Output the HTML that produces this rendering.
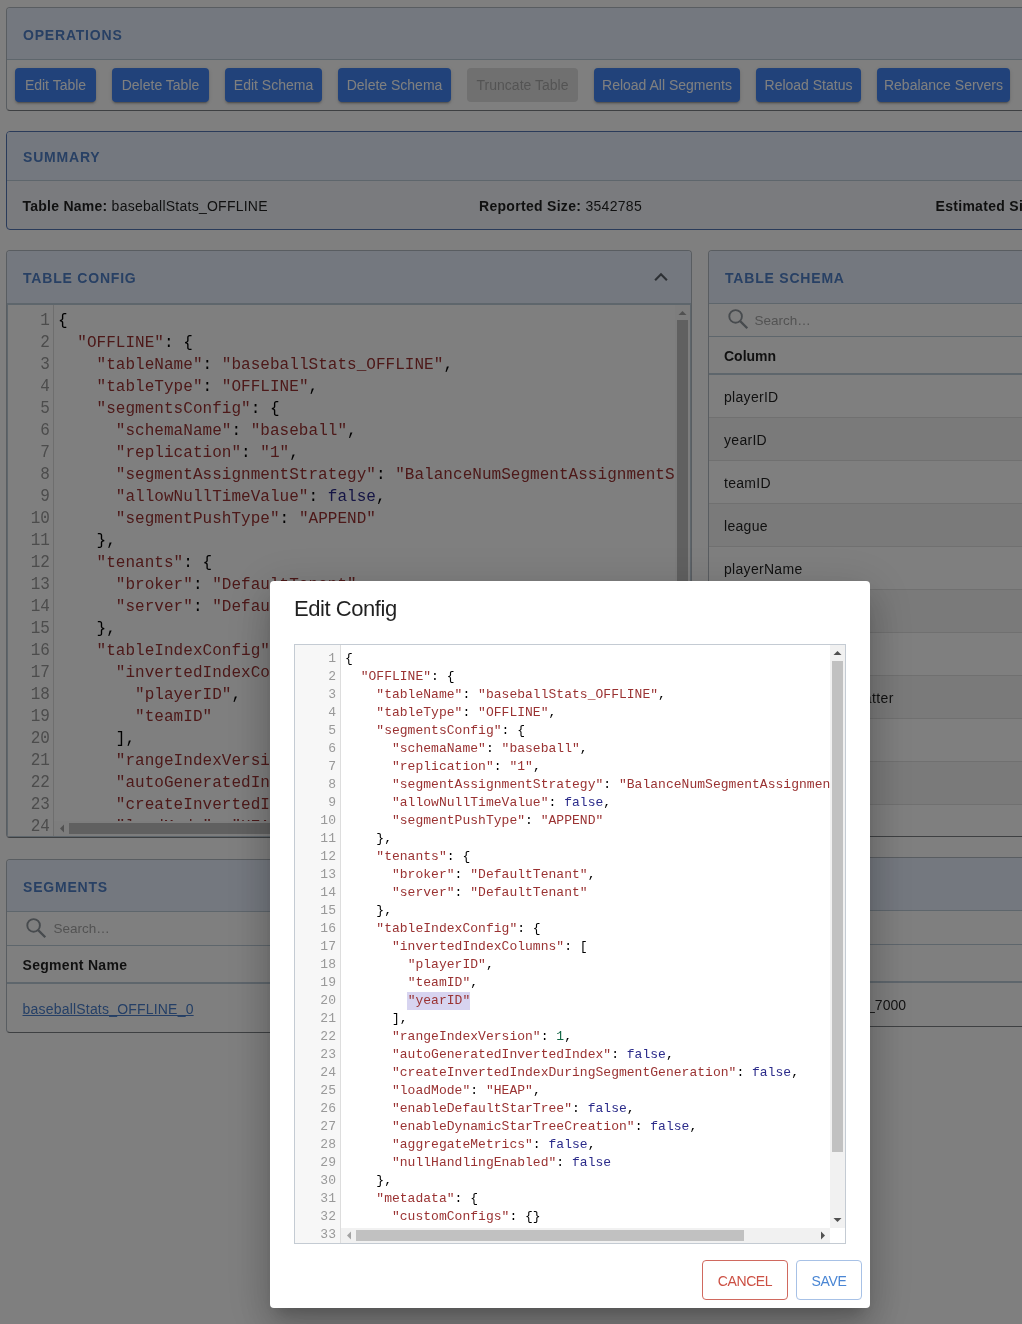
<!DOCTYPE html>
<html><head><meta charset="utf-8"><title>Edit Config</title>
<style>
html,body{margin:0;padding:0;}
body{width:1022px;height:1324px;overflow:hidden;position:relative;background:#ffffff;font-family:"Liberation Sans",sans-serif;color:rgba(0,0,0,0.87);}
.A{position:absolute;}
.t{position:absolute;white-space:pre;font-size:14px;line-height:16px;}
.card{position:absolute;box-sizing:border-box;background:#fff;border:1px solid #b3bac2;border-bottom-color:#7c8085;border-radius:4px;overflow:hidden;}
.hdr{position:absolute;left:0;right:0;top:0;background:#e9f1fe;border-bottom:1px solid #bdccd9;}
.ttl{font-weight:bold;letter-spacing:0.8px;color:#5080c8;}
.btn{position:absolute;top:68px;height:34px;box-sizing:border-box;background:#4285f4;color:#fff;border-radius:4px;font-size:14px;line-height:34px;text-align:center;white-space:pre;box-shadow:0 3px 1px -2px rgba(0,0,0,.2),0 2px 2px 0 rgba(0,0,0,.14),0 1px 5px 0 rgba(0,0,0,.12);}
.btn.dis{background:#e0e0e0;color:rgba(0,0,0,0.26);box-shadow:none;}
.b{position:absolute;white-space:pre;font-family:"Liberation Mono",monospace;font-size:16px;line-height:22px;letter-spacing:0.032px;color:#000;}
.m{position:absolute;white-space:pre;font-family:"Liberation Mono",monospace;font-size:13px;line-height:18px;letter-spacing:0.026px;color:#000;}
.ln{color:#999;text-align:right;}
.s{color:#9a3232;}
.a{color:#2b2b8a;}
.n{color:#164;}
.sb{position:absolute;background:#f1f1f1;}
.th{position:absolute;background:#c1c1c1;}
.row{position:absolute;left:0;right:0;border-bottom:1px solid rgba(224,224,224,1);}
.backdrop{position:absolute;left:0;top:0;width:1022px;height:1324px;background:rgba(0,0,0,0.5);}
.modal{position:absolute;left:270px;top:581px;width:600px;height:727px;background:#fff;border-radius:4px;box-shadow:0px 11px 15px -7px rgba(0,0,0,0.2),0px 24px 38px 3px rgba(0,0,0,0.14),0px 9px 46px 8px rgba(0,0,0,0.12);}

.b.ln{transform:scaleY(1.1);transform-origin:50% 68%;}

</style></head><body>
<div id="root" style="position:absolute;left:0;top:0;width:1022px;height:1324px;overflow:hidden;will-change:transform">
<div class="card" style="left:6px;top:7px;width:1100px;height:104px;">
<div class="hdr" style="height:51px;"></div>
<div class="t ttl" style="left:16.00px;top:19.15px;">OPERATIONS</div>

</div>
<div class="btn" style="left:15px;width:81px">Edit Table</div>
<div class="btn" style="left:112px;width:97px">Delete Table</div>
<div class="btn" style="left:225px;width:97px">Edit Schema</div>
<div class="btn" style="left:338px;width:113px">Delete Schema</div>
<div class="btn dis" style="left:467px;width:111px">Truncate Table</div>
<div class="btn" style="left:594px;width:146px">Reload All Segments</div>
<div class="btn" style="left:756px;width:105px">Reload Status</div>
<div class="btn" style="left:877px;width:133px">Rebalance Servers</div>
<div class="card" style="left:6px;top:131px;width:1100px;height:99px;background:#f4f7fc;border-color:#5476b4;">
<div class="hdr" style="height:48px;"></div>
<div class="t ttl" style="left:16.00px;top:17.15px;">SUMMARY</div>

</div>
<div class="t" style="left:22.50px;top:198.15px;letter-spacing:0.25px"><b>Table Name:</b> baseballStats_OFFLINE</div>
<div class="t" style="left:479.00px;top:198.15px;letter-spacing:0.3px"><b>Reported Size:</b> 3542785</div>
<div class="t" style="left:935.50px;top:198.15px;letter-spacing:0.3px"><b>Estimated Size:</b> 3542785</div>
<div class="card" style="left:6px;top:250px;width:686px;height:588px;">
<div class="hdr" style="height:52px;"></div>
<div class="t ttl" style="left:16.00px;top:19.15px;">TABLE CONFIG</div>
<div class="A" style="left:0;top:53px;width:684px;height:533px;box-sizing:border-box;border:1px solid #bdccd9;overflow:hidden">
<div class="A" style="left:0;top:0;width:45px;height:531px;border-right:1px solid #ddd;background:#fff"></div>
<div class="A" style="left:0;top:0;width:45px;height:531px;overflow:hidden">
<div class="b ln" style="top:5px;left:0;width:42px">1</div>
<div class="b ln" style="top:27px;left:0;width:42px">2</div>
<div class="b ln" style="top:49px;left:0;width:42px">3</div>
<div class="b ln" style="top:71px;left:0;width:42px">4</div>
<div class="b ln" style="top:93px;left:0;width:42px">5</div>
<div class="b ln" style="top:115px;left:0;width:42px">6</div>
<div class="b ln" style="top:137px;left:0;width:42px">7</div>
<div class="b ln" style="top:159px;left:0;width:42px">8</div>
<div class="b ln" style="top:181px;left:0;width:42px">9</div>
<div class="b ln" style="top:203px;left:0;width:42px">10</div>
<div class="b ln" style="top:225px;left:0;width:42px">11</div>
<div class="b ln" style="top:247px;left:0;width:42px">12</div>
<div class="b ln" style="top:269px;left:0;width:42px">13</div>
<div class="b ln" style="top:291px;left:0;width:42px">14</div>
<div class="b ln" style="top:313px;left:0;width:42px">15</div>
<div class="b ln" style="top:335px;left:0;width:42px">16</div>
<div class="b ln" style="top:357px;left:0;width:42px">17</div>
<div class="b ln" style="top:379px;left:0;width:42px">18</div>
<div class="b ln" style="top:401px;left:0;width:42px">19</div>
<div class="b ln" style="top:423px;left:0;width:42px">20</div>
<div class="b ln" style="top:445px;left:0;width:42px">21</div>
<div class="b ln" style="top:467px;left:0;width:42px">22</div>
<div class="b ln" style="top:489px;left:0;width:42px">23</div>
<div class="b ln" style="top:511px;left:0;width:42px">24</div>
</div>
<div class="A" style="left:46px;top:0;width:621px;height:516px;overflow:hidden">
<div class="b" style="top:5px;left:4px">{</div>
<div class="b" style="top:27px;left:4px">  <span class="s">&quot;OFFLINE&quot;</span>: {</div>
<div class="b" style="top:49px;left:4px">    <span class="s">&quot;tableName&quot;</span>: <span class="s">&quot;baseballStats_OFFLINE&quot;</span>,</div>
<div class="b" style="top:71px;left:4px">    <span class="s">&quot;tableType&quot;</span>: <span class="s">&quot;OFFLINE&quot;</span>,</div>
<div class="b" style="top:93px;left:4px">    <span class="s">&quot;segmentsConfig&quot;</span>: {</div>
<div class="b" style="top:115px;left:4px">      <span class="s">&quot;schemaName&quot;</span>: <span class="s">&quot;baseball&quot;</span>,</div>
<div class="b" style="top:137px;left:4px">      <span class="s">&quot;replication&quot;</span>: <span class="s">&quot;1&quot;</span>,</div>
<div class="b" style="top:159px;left:4px">      <span class="s">&quot;segmentAssignmentStrategy&quot;</span>: <span class="s">&quot;BalanceNumSegmentAssignmentStrategy&quot;</span>,</div>
<div class="b" style="top:181px;left:4px">      <span class="s">&quot;allowNullTimeValue&quot;</span>: <span class="a">false</span>,</div>
<div class="b" style="top:203px;left:4px">      <span class="s">&quot;segmentPushType&quot;</span>: <span class="s">&quot;APPEND&quot;</span></div>
<div class="b" style="top:225px;left:4px">    },</div>
<div class="b" style="top:247px;left:4px">    <span class="s">&quot;tenants&quot;</span>: {</div>
<div class="b" style="top:269px;left:4px">      <span class="s">&quot;broker&quot;</span>: <span class="s">&quot;DefaultTenant&quot;</span>,</div>
<div class="b" style="top:291px;left:4px">      <span class="s">&quot;server&quot;</span>: <span class="s">&quot;DefaultTenant&quot;</span></div>
<div class="b" style="top:313px;left:4px">    },</div>
<div class="b" style="top:335px;left:4px">    <span class="s">&quot;tableIndexConfig&quot;</span>: {</div>
<div class="b" style="top:357px;left:4px">      <span class="s">&quot;invertedIndexColumns&quot;</span>: [</div>
<div class="b" style="top:379px;left:4px">        <span class="s">&quot;playerID&quot;</span>,</div>
<div class="b" style="top:401px;left:4px">        <span class="s">&quot;teamID&quot;</span></div>
<div class="b" style="top:423px;left:4px">      ],</div>
<div class="b" style="top:445px;left:4px">      <span class="s">&quot;rangeIndexVersion&quot;</span>: <span class="n">1</span>,</div>
<div class="b" style="top:467px;left:4px">      <span class="s">&quot;autoGeneratedInvertedIndex&quot;</span>: <span class="a">false</span>,</div>
<div class="b" style="top:489px;left:4px">      <span class="s">&quot;createInvertedIndexDuringSegmentGeneration&quot;</span>: <span class="a">false</span>,</div>
<div class="b" style="top:511px;left:4px">      <span class="s">&quot;loadMode&quot;</span>: <span class="s">&quot;HEAP&quot;</span>,</div>
</div>
<div class="sb" style="left:667px;top:0;width:15px;height:516px;background:#fafafa"></div>
<svg class="A" style="left:667px;top:0" width="15" height="15"><path d="M3.5 10 L7.5 6 L11.5 10 Z" fill="#a3a3a3"/></svg>
<div class="th" style="left:669px;top:15px;width:11px;height:420px"></div>
<div class="sb" style="left:46px;top:516px;width:621px;height:15px;background:#fafafa"></div>
<svg class="A" style="left:46px;top:516px" width="15" height="15"><path d="M10 3.5 L6 7.5 L10 11.5 Z" fill="#a3a3a3"/></svg>
<div class="th" style="left:61px;top:518px;width:500px;height:11px"></div>
<div class="A" style="left:667px;top:516px;width:15px;height:15px;background:#fff"></div>
</div>
</div>
<svg class="A" style="left:650px;top:268px" width="22" height="18" viewBox="0 0 22 18"><path d="M5.1 12.3 L11 6.3 L16.9 12.3" fill="none" stroke="#5a6069" stroke-width="2.1"/></svg>
<div class="card" style="left:708px;top:250px;width:400px;height:587px;">
<div class="hdr" style="height:52px;"></div>
<div class="t ttl" style="left:16.00px;top:19.15px;">TABLE SCHEMA</div>
<div class="A" style="left:0;right:0;top:85px;border-top:1px solid #bdccd9"></div>
<div class="A" style="left:0;right:0;top:122px;border-top:2px solid #bdccd9"></div>
<div class="A" style="left:0;right:0;top:124px;height:42px;background:#fff;border-bottom:1px solid #e0e0e0"></div>
<div class="A" style="left:0;right:0;top:167px;height:42px;background:rgba(0,0,0,0.04);border-bottom:1px solid #e0e0e0"></div>
<div class="A" style="left:0;right:0;top:210px;height:42px;background:#fff;border-bottom:1px solid #e0e0e0"></div>
<div class="A" style="left:0;right:0;top:253px;height:42px;background:rgba(0,0,0,0.04);border-bottom:1px solid #e0e0e0"></div>
<div class="A" style="left:0;right:0;top:296px;height:42px;background:#fff;border-bottom:1px solid #e0e0e0"></div>
<div class="A" style="left:0;right:0;top:339px;height:42px;background:rgba(0,0,0,0.04);border-bottom:1px solid #e0e0e0"></div>
<div class="A" style="left:0;right:0;top:382px;height:42px;background:#fff;border-bottom:1px solid #e0e0e0"></div>
<div class="A" style="left:0;right:0;top:425px;height:42px;background:rgba(0,0,0,0.04);border-bottom:1px solid #e0e0e0"></div>
<div class="A" style="left:0;right:0;top:468px;height:42px;background:#fff;border-bottom:1px solid #e0e0e0"></div>
<div class="A" style="left:0;right:0;top:511px;height:42px;background:rgba(0,0,0,0.04);border-bottom:1px solid #e0e0e0"></div>
<div class="A" style="left:0;right:0;top:554px;height:42px;background:#fff;border-bottom:1px solid #e0e0e0"></div>
</div>
<svg class="A" style="left:722.1px;top:303.3px" width="30" height="30"><circle cx="13.6" cy="13.4" r="6.3" fill="none" stroke="#8f969d" stroke-width="1.9"/><path d="M17.9 17.9 L25.3 25.3" stroke="#8f969d" stroke-width="2.3"/></svg>
<div class="t" style="left:754.50px;top:312.65px;color:#a6a6a6;font-size:13.5px">Search…</div>
<div class="t" style="left:724.00px;top:348.15px;"><b>Column</b></div>
<div class="t" style="left:724.00px;top:388.65px;letter-spacing:0.3px">playerID</div>
<div class="t" style="left:724.00px;top:431.65px;letter-spacing:0.3px">yearID</div>
<div class="t" style="left:724.00px;top:474.65px;letter-spacing:0.3px">teamID</div>
<div class="t" style="left:724.00px;top:517.65px;letter-spacing:0.3px">league</div>
<div class="t" style="left:724.00px;top:560.65px;letter-spacing:0.3px">playerName</div>
<div class="t" style="left:724.00px;top:603.65px;letter-spacing:0.3px">playerStint</div>
<div class="t" style="left:724.00px;top:646.65px;letter-spacing:0.3px">numberOfGames</div>
<div class="t" style="left:724.00px;top:689.65px;letter-spacing:0.42px">numberOfGamesAsBatter</div>
<div class="t" style="left:724.00px;top:732.65px;letter-spacing:0.3px">AtBatting</div>
<div class="t" style="left:724.00px;top:775.65px;letter-spacing:0.3px">runs</div>
<div class="t" style="left:724.00px;top:818.65px;letter-spacing:0.3px">hits</div>
<div class="card" style="left:6px;top:859px;width:686px;height:174px;">
<div class="hdr" style="height:51px;"></div>
<div class="t ttl" style="left:16.00px;top:19.15px;">SEGMENTS</div>
<div class="A" style="left:0;right:0;top:85px;border-top:1px solid #bdccd9"></div>
<div class="A" style="left:0;right:0;top:122px;border-top:2px solid #bdccd9"></div>
</div>
<svg class="A" style="left:20px;top:912px" width="30" height="30"><circle cx="13.6" cy="13.4" r="6.3" fill="none" stroke="#8f969d" stroke-width="1.9"/><path d="M17.9 17.9 L25.3 25.3" stroke="#8f969d" stroke-width="2.3"/></svg>
<div class="t" style="left:53.50px;top:920.65px;color:#a6a6a6;font-size:13.5px">Search…</div>
<div class="t" style="left:22.50px;top:957.15px;letter-spacing:0.3px"><b>Segment Name</b></div>
<div class="t" style="left:22.50px;top:1001.15px;color:#4a7fcc;text-decoration:underline;letter-spacing:0.2px">baseballStats_OFFLINE_0</div>
<div class="card" style="left:708px;top:857px;width:400px;height:170px;">
<div class="hdr" style="height:52px;"></div>
<div class="t ttl" style="left:16.00px;top:19.15px;">SERVERS</div>
<div class="A" style="left:0;right:0;top:86px;border-top:1px solid #bdccd9"></div><div class="A" style="left:0;right:0;top:123px;border-top:2px solid #bdccd9"></div>
</div>
<div class="t" style="right:116px;top:997.15px;">Server_172.17.0.5_7000</div>
<div class="backdrop"></div>
<div class="modal"><div class="A" style="left:24px;top:15.38px;font-size:22px;line-height:26px;letter-spacing:-0.45px;white-space:pre;color:rgba(0,0,0,0.87)">Edit Config</div>
<div class="A" style="left:24px;top:63px;width:552px;height:600px;box-sizing:border-box;border:1px solid #c4cbd3;overflow:hidden;background:#fff">
<div class="A" style="left:0;top:0;width:45px;height:598px;background:#f7f7f7;border-right:1px solid #ddd"></div>
<div class="A" style="left:0;top:0;width:45px;height:598px;overflow:hidden">
<div class="m ln" style="top:5px;left:0;width:41px">1</div>
<div class="m ln" style="top:23px;left:0;width:41px">2</div>
<div class="m ln" style="top:41px;left:0;width:41px">3</div>
<div class="m ln" style="top:59px;left:0;width:41px">4</div>
<div class="m ln" style="top:77px;left:0;width:41px">5</div>
<div class="m ln" style="top:95px;left:0;width:41px">6</div>
<div class="m ln" style="top:113px;left:0;width:41px">7</div>
<div class="m ln" style="top:131px;left:0;width:41px">8</div>
<div class="m ln" style="top:149px;left:0;width:41px">9</div>
<div class="m ln" style="top:167px;left:0;width:41px">10</div>
<div class="m ln" style="top:185px;left:0;width:41px">11</div>
<div class="m ln" style="top:203px;left:0;width:41px">12</div>
<div class="m ln" style="top:221px;left:0;width:41px">13</div>
<div class="m ln" style="top:239px;left:0;width:41px">14</div>
<div class="m ln" style="top:257px;left:0;width:41px">15</div>
<div class="m ln" style="top:275px;left:0;width:41px">16</div>
<div class="m ln" style="top:293px;left:0;width:41px">17</div>
<div class="m ln" style="top:311px;left:0;width:41px">18</div>
<div class="m ln" style="top:329px;left:0;width:41px">19</div>
<div class="m ln" style="top:347px;left:0;width:41px">20</div>
<div class="m ln" style="top:365px;left:0;width:41px">21</div>
<div class="m ln" style="top:383px;left:0;width:41px">22</div>
<div class="m ln" style="top:401px;left:0;width:41px">23</div>
<div class="m ln" style="top:419px;left:0;width:41px">24</div>
<div class="m ln" style="top:437px;left:0;width:41px">25</div>
<div class="m ln" style="top:455px;left:0;width:41px">26</div>
<div class="m ln" style="top:473px;left:0;width:41px">27</div>
<div class="m ln" style="top:491px;left:0;width:41px">28</div>
<div class="m ln" style="top:509px;left:0;width:41px">29</div>
<div class="m ln" style="top:527px;left:0;width:41px">30</div>
<div class="m ln" style="top:545px;left:0;width:41px">31</div>
<div class="m ln" style="top:563px;left:0;width:41px">32</div>
<div class="m ln" style="top:581px;left:0;width:41px">33</div>
</div>
<div class="A" style="left:46px;top:0;width:489px;height:583px;overflow:hidden">
<div class="m" style="top:5px;left:4px">{</div>
<div class="m" style="top:23px;left:4px">  <span class="s">&quot;OFFLINE&quot;</span>: {</div>
<div class="m" style="top:41px;left:4px">    <span class="s">&quot;tableName&quot;</span>: <span class="s">&quot;baseballStats_OFFLINE&quot;</span>,</div>
<div class="m" style="top:59px;left:4px">    <span class="s">&quot;tableType&quot;</span>: <span class="s">&quot;OFFLINE&quot;</span>,</div>
<div class="m" style="top:77px;left:4px">    <span class="s">&quot;segmentsConfig&quot;</span>: {</div>
<div class="m" style="top:95px;left:4px">      <span class="s">&quot;schemaName&quot;</span>: <span class="s">&quot;baseball&quot;</span>,</div>
<div class="m" style="top:113px;left:4px">      <span class="s">&quot;replication&quot;</span>: <span class="s">&quot;1&quot;</span>,</div>
<div class="m" style="top:131px;left:4px">      <span class="s">&quot;segmentAssignmentStrategy&quot;</span>: <span class="s">&quot;BalanceNumSegmentAssignmentStrategy&quot;</span>,</div>
<div class="m" style="top:149px;left:4px">      <span class="s">&quot;allowNullTimeValue&quot;</span>: <span class="a">false</span>,</div>
<div class="m" style="top:167px;left:4px">      <span class="s">&quot;segmentPushType&quot;</span>: <span class="s">&quot;APPEND&quot;</span></div>
<div class="m" style="top:185px;left:4px">    },</div>
<div class="m" style="top:203px;left:4px">    <span class="s">&quot;tenants&quot;</span>: {</div>
<div class="m" style="top:221px;left:4px">      <span class="s">&quot;broker&quot;</span>: <span class="s">&quot;DefaultTenant&quot;</span>,</div>
<div class="m" style="top:239px;left:4px">      <span class="s">&quot;server&quot;</span>: <span class="s">&quot;DefaultTenant&quot;</span></div>
<div class="m" style="top:257px;left:4px">    },</div>
<div class="m" style="top:275px;left:4px">    <span class="s">&quot;tableIndexConfig&quot;</span>: {</div>
<div class="m" style="top:293px;left:4px">      <span class="s">&quot;invertedIndexColumns&quot;</span>: [</div>
<div class="m" style="top:311px;left:4px">        <span class="s">&quot;playerID&quot;</span>,</div>
<div class="m" style="top:329px;left:4px">        <span class="s">&quot;teamID&quot;</span>,</div>
<div class="A" style="top:347px;left:66.4px;width:62.4px;height:18px;background:#d7d4f0"></div>
<div class="m" style="top:347px;left:4px">        <span class="s">&quot;yearID&quot;</span></div>
<div class="m" style="top:365px;left:4px">      ],</div>
<div class="m" style="top:383px;left:4px">      <span class="s">&quot;rangeIndexVersion&quot;</span>: <span class="n">1</span>,</div>
<div class="m" style="top:401px;left:4px">      <span class="s">&quot;autoGeneratedInvertedIndex&quot;</span>: <span class="a">false</span>,</div>
<div class="m" style="top:419px;left:4px">      <span class="s">&quot;createInvertedIndexDuringSegmentGeneration&quot;</span>: <span class="a">false</span>,</div>
<div class="m" style="top:437px;left:4px">      <span class="s">&quot;loadMode&quot;</span>: <span class="s">&quot;HEAP&quot;</span>,</div>
<div class="m" style="top:455px;left:4px">      <span class="s">&quot;enableDefaultStarTree&quot;</span>: <span class="a">false</span>,</div>
<div class="m" style="top:473px;left:4px">      <span class="s">&quot;enableDynamicStarTreeCreation&quot;</span>: <span class="a">false</span>,</div>
<div class="m" style="top:491px;left:4px">      <span class="s">&quot;aggregateMetrics&quot;</span>: <span class="a">false</span>,</div>
<div class="m" style="top:509px;left:4px">      <span class="s">&quot;nullHandlingEnabled&quot;</span>: <span class="a">false</span></div>
<div class="m" style="top:527px;left:4px">    },</div>
<div class="m" style="top:545px;left:4px">    <span class="s">&quot;metadata&quot;</span>: {</div>
<div class="m" style="top:563px;left:4px">      <span class="s">&quot;customConfigs&quot;</span>: {}</div>
<div class="m" style="top:581px;left:4px">    }</div>
</div>
<div class="sb" style="left:535px;top:0;width:15px;height:583px"></div>
<div class="th" style="left:537px;top:16px;width:11px;height:491px"></div>
<div class="sb" style="left:46px;top:583px;width:489px;height:15px"></div>
<div class="th" style="left:61px;top:585px;width:388px;height:11px"></div>
<svg class="A" style="left:535px;top:0" width="15" height="15"><path d="M3.5 10 L7.5 6 L11.5 10 Z" fill="#505050"/></svg>
<svg class="A" style="left:535px;top:568px" width="15" height="15"><path d="M3.5 5 L7.5 9 L11.5 5 Z" fill="#505050"/></svg>
<svg class="A" style="left:46px;top:583px" width="15" height="15"><path d="M10 3.5 L6 7.5 L10 11.5 Z" fill="#a3a3a3"/></svg>
<svg class="A" style="left:521px;top:583px" width="15" height="15"><path d="M5 3.5 L9 7.5 L5 11.5 Z" fill="#505050"/></svg>
<div class="A" style="left:535px;top:583px;width:15px;height:15px;background:#fff"></div>
</div>
<div class="A" style="left:432px;top:679px;width:86px;height:40px;box-sizing:border-box;border:1px solid #d0695f;border-radius:4px;color:#cc5044;font-size:14px;line-height:40px;letter-spacing:-0.4px;text-align:center">CANCEL</div>
<div class="A" style="left:526px;top:679px;width:66px;height:40px;box-sizing:border-box;border:1px solid #a7c1e6;border-radius:4px;color:#4a86d4;font-size:14px;line-height:40px;letter-spacing:-0.3px;text-align:center">SAVE</div></div>
</div>
</body></html>
